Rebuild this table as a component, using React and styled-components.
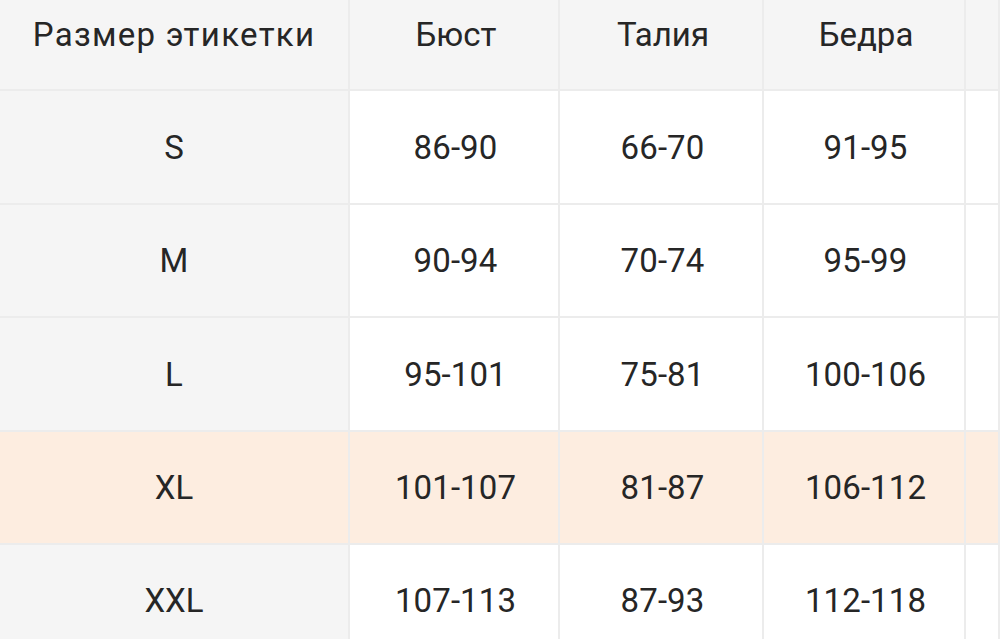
import React from "react";
import styled, { createGlobalStyle } from "styled-components";

const GlobalStyle = createGlobalStyle`
  html, body {
    margin: 0;
    padding: 0;
    background: #ffffff;
    overflow: hidden;
  }
  body {
    font-family: Roboto, "Noto Sans", "Liberation Sans", sans-serif;
  }
`;

const headers = ["Бюст", "Талия", "Бедра", ""];

const rows = [
  { size: "S", values: ["86-90", "66-70", "91-95"], height: 114 },
  { size: "M", values: ["90-94", "70-74", "95-99"], height: 113 },
  { size: "L", values: ["95-101", "75-81", "100-106"], height: 114 },
  { size: "XL", values: ["101-107", "81-87", "106-112"], height: 113, active: true },
  { size: "XXL", values: ["107-113", "87-93", "112-118"], height: 113 },
];

const App = () => {
  return (
    <>
      <GlobalStyle />
      <Table>
        <HeadRow>
          <HeadCell $wide>Размер этикетки</HeadCell>
          {headers.map((h, i) => (
            <HeadCell key={i}>{h}</HeadCell>
          ))}
        </HeadRow>
        {rows.map((row) => (
          <Row key={row.size} $height={row.height}>
            <SizeCell $active={row.active}>{row.size}</SizeCell>
            {row.values.map((v, i) => (
              <Cell key={i} $active={row.active}>
                {v}
              </Cell>
            ))}
            <Cell $active={row.active} />
          </Row>
        ))}
      </Table>
    </>
  );
};

export default App;

const Table = styled.div`
  width: 1000px;
  height: 639px;
  overflow: hidden;
  display: flex;
  flex-direction: column;
`;

const HeadRow = styled.div`
  display: grid;
  grid-template-columns: 350px 210px 204px 202px 1fr;
  height: 91px;
  flex-shrink: 0;
`;

const Row = styled.div`
  display: grid;
  grid-template-columns: 350px 210px 204px 202px 1fr;
  height: ${(p) => p.$height}px;
  flex-shrink: 0;
`;

const BaseCell = styled.div`
  box-sizing: border-box;
  display: flex;
  align-items: center;
  justify-content: center;
  border-right: 2px solid #ececec;
  border-bottom: 2px solid #ececec;
  color: #262626;
  font-size: 33px;
  white-space: nowrap;
`;

const HeadCell = styled(BaseCell)`
  background: #f5f5f5;
  padding-bottom: 20px;
  padding-left: ${(p) => (p.$wide ? "0" : "4px")};
  letter-spacing: ${(p) => (p.$wide ? "1.3px" : "0")};
`;

const SizeCell = styled(BaseCell)`
  background: ${(p) => (p.$active ? "#fdede0" : "#f5f5f5")};
`;

const Cell = styled(BaseCell)`
  background: ${(p) => (p.$active ? "#fdede0" : "#ffffff")};
  padding-left: 3px;
  letter-spacing: 0.1px;
`;
